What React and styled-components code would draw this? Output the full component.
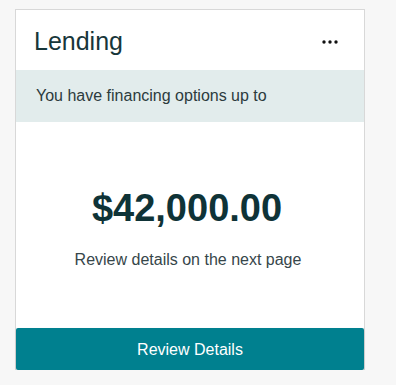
import React from 'react';
import styled, { createGlobalStyle } from 'styled-components';

const GlobalStyle = createGlobalStyle`
  html, body {
    margin: 0;
    padding: 0;
    background: #f7f7f7;
    font-family: "Liberation Sans", Arial, sans-serif;
  }
`;

const Page = styled.div`
  padding: 9px 0 0 15px;
`;

const Card = styled.section`
  box-sizing: border-box;
  width: 350px;
  background: #ffffff;
  border: 1px solid #d8d8d8;
  border-bottom: none;
  display: flex;
  flex-direction: column;
`;

const Header = styled.header`
  height: 60px;
  display: flex;
  align-items: center;
  justify-content: space-between;
  padding: 0 26px 0 18px;
`;

const Title = styled.h2`
  margin: 2px 0 0;
  font-size: 25px;
  line-height: 28px;
  font-weight: 400;
  color: #17363a;
`;

const MenuButton = styled.button`
  border: none;
  background: none;
  padding: 0;
  margin-top: 4px;
  display: flex;
  cursor: pointer;
`;

const Band = styled.div`
  height: 52px;
  display: flex;
  align-items: center;
  padding: 0 20px;
  background: #e2ecec;
  font-size: 16px;
  line-height: 20px;
  color: #2c3b3d;
`;

const Body = styled.div`
  height: 206px;
  box-sizing: border-box;
  padding-top: 64px;
  display: flex;
  flex-direction: column;
  align-items: center;
`;

const Amount = styled.div`
  font-size: 38px;
  line-height: 44px;
  font-weight: 700;
  color: #0f3337;
  margin-right: 6px;
`;

const Note = styled.p`
  margin: 20px 0 0;
  font-size: 16px;
  line-height: 20px;
  color: #36464a;
  margin-right: 4px;
`;

const Action = styled.button`
  height: 42px;
  border: none;
  border-radius: 2px;
  background: #00808f;
  color: #ffffff;
  font-family: inherit;
  font-size: 16px;
  line-height: 20px;
  padding: 2px 0 0;
  box-shadow: 0 1px 2px rgba(0, 0, 0, 0.18);
  cursor: pointer;
`;

const Dots = () => (
  <svg width="16" height="4" viewBox="0 0 16 4" aria-hidden="true">
    <circle cx="2" cy="2" r="1.7" fill="#111" />
    <circle cx="8" cy="2" r="1.7" fill="#111" />
    <circle cx="14" cy="2" r="1.7" fill="#111" />
  </svg>
);

export default function App() {
  return (
    <>
      <GlobalStyle />
      <Page>
        <Card>
          <Header>
            <Title>Lending</Title>
            <MenuButton aria-label="More options">
              <Dots />
            </MenuButton>
          </Header>
          <Band>You have financing options up to</Band>
          <Body>
            <Amount>$42,000.00</Amount>
            <Note>Review details on the next page</Note>
          </Body>
          <Action>Review Details</Action>
        </Card>
      </Page>
    </>
  );
}
